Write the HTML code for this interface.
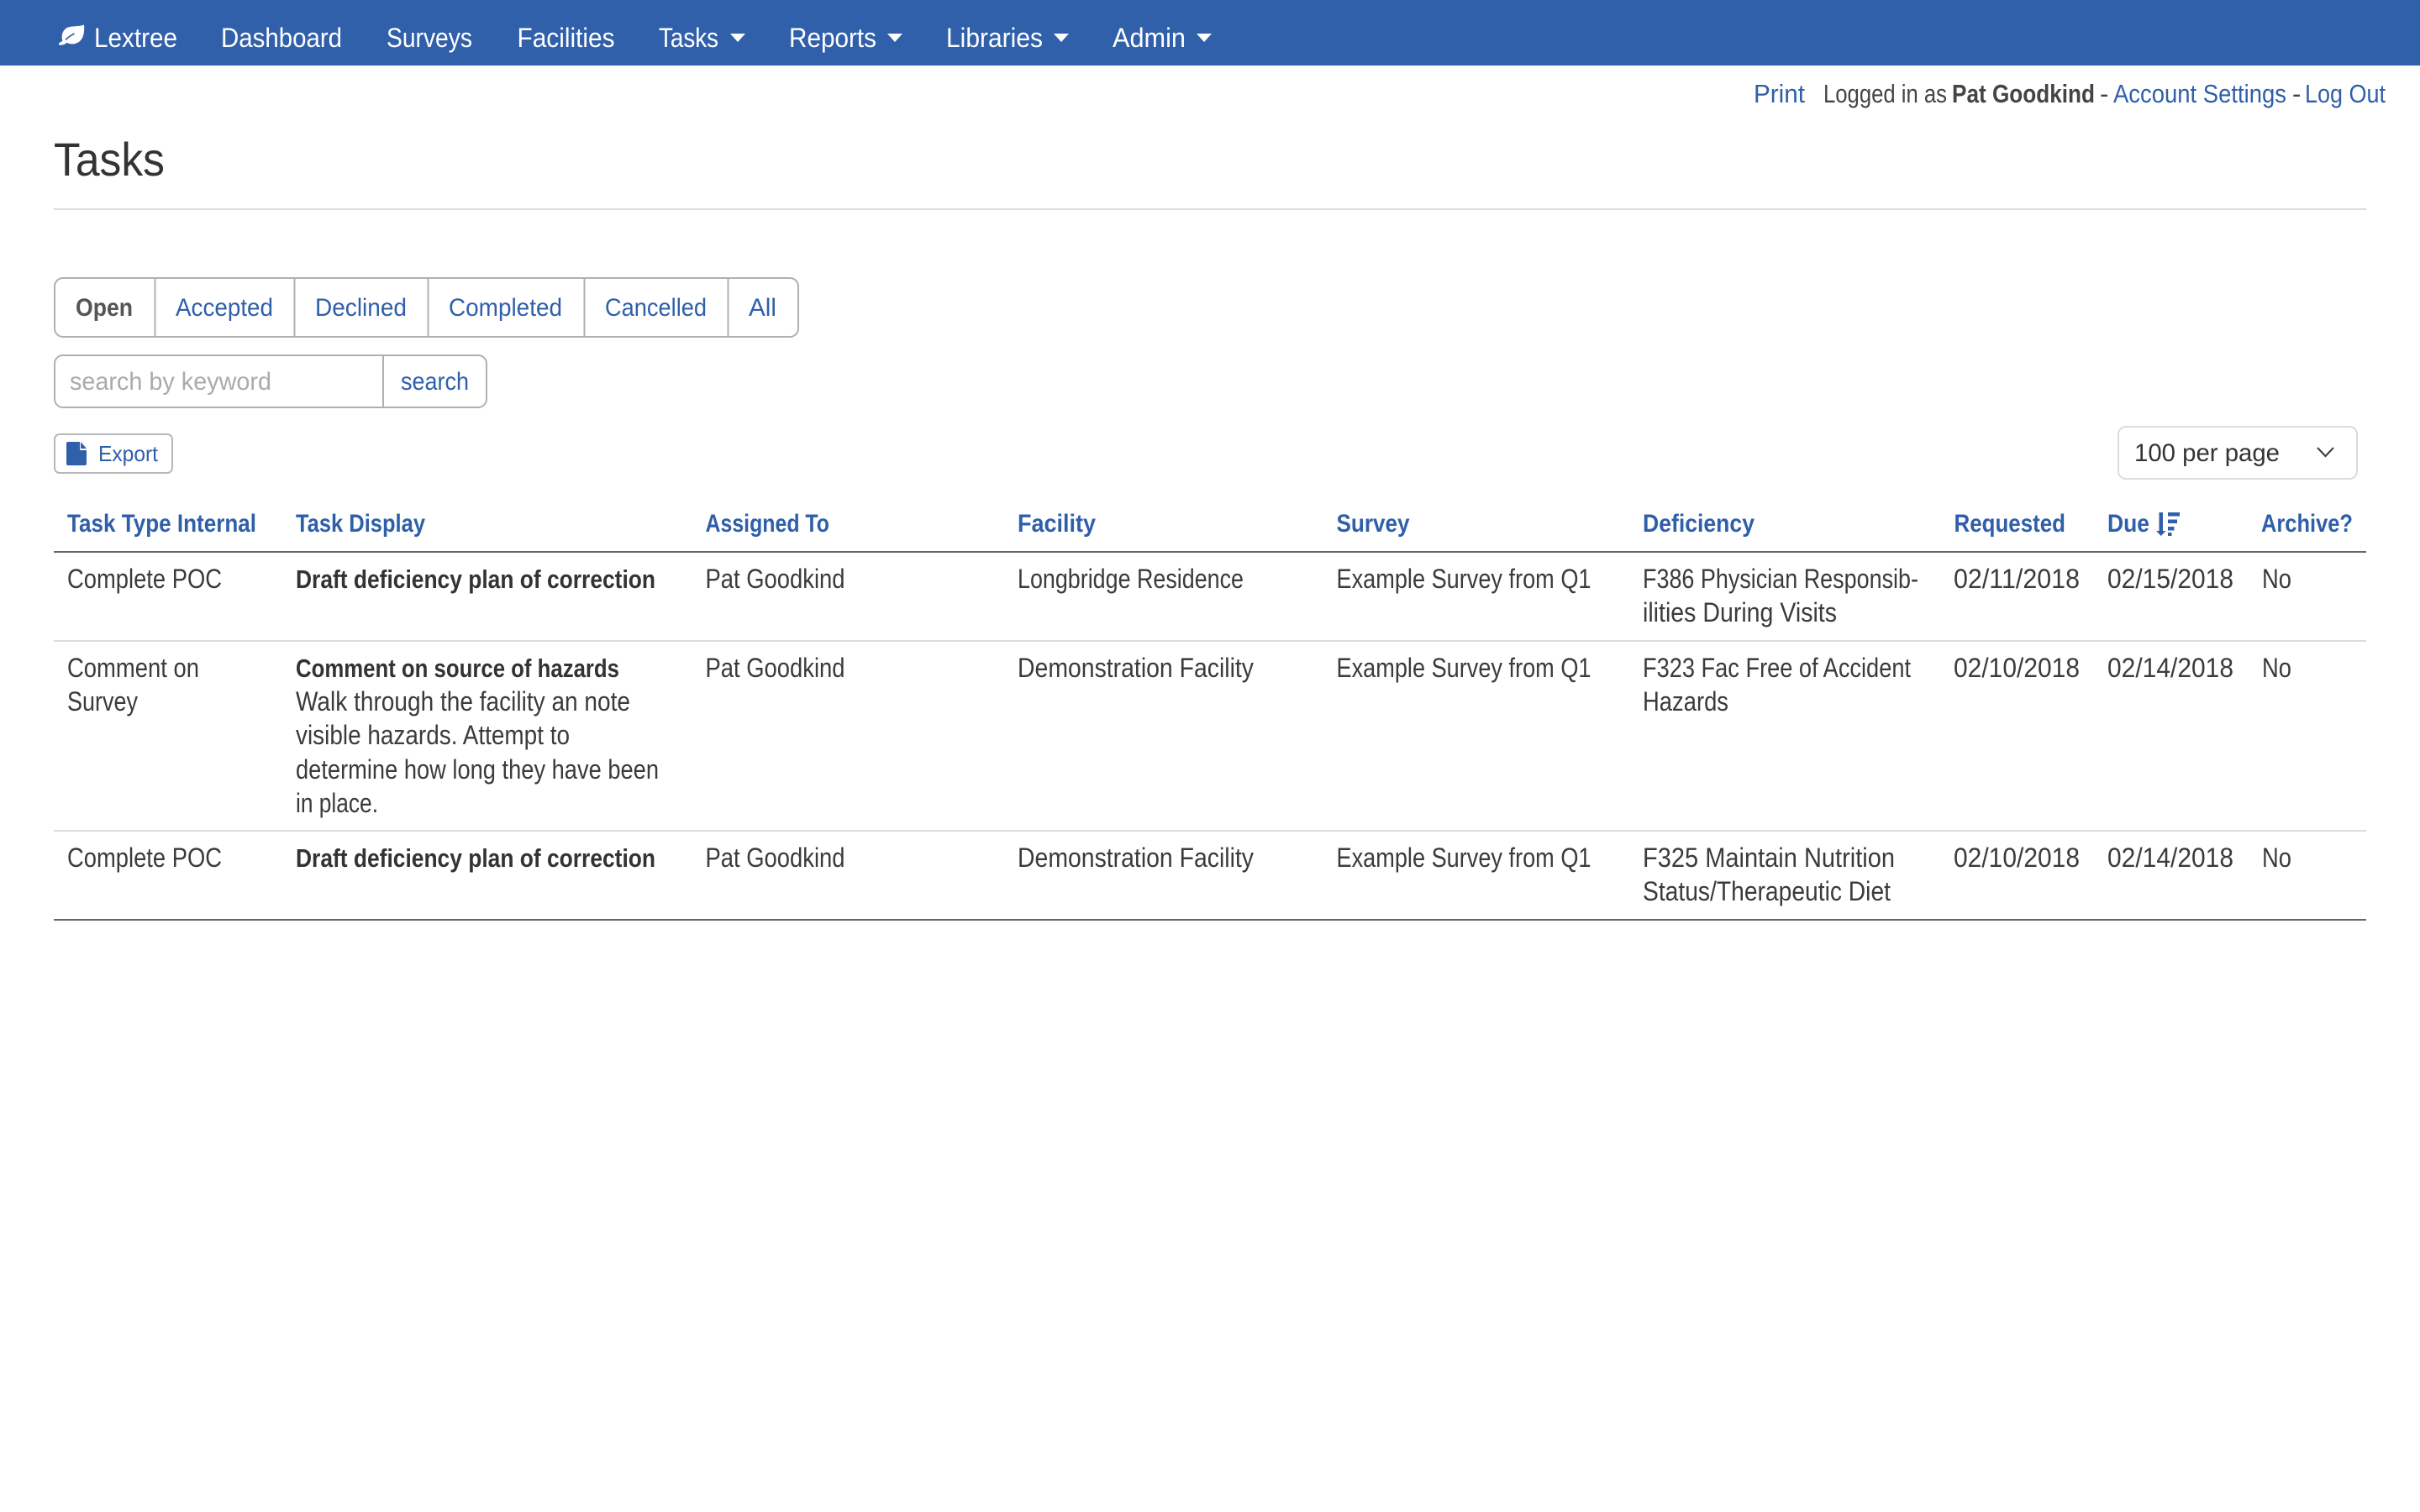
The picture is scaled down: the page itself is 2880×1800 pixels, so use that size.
<!DOCTYPE html>
<html><head><meta charset="utf-8"><title>Tasks</title>
<style>
html,body{margin:0;padding:0;background:#fff;width:2880px;height:1800px;overflow:hidden}
svg{display:block}
text{font-family:"Liberation Sans",sans-serif;font-size:32px;fill:#3b3b3b}
.n{fill:#fff}
.l{fill:#2f5fa9}
.h{fill:#2f5fa9;font-weight:700;font-size:30px}
.b{font-weight:700;font-size:31px;fill:#333}
</style></head><body>
<svg width="2880" height="1800" viewBox="0 0 2880 1800" xmlns="http://www.w3.org/2000/svg">
<rect x="0" y="0" width="2880" height="78" fill="#3160aa"/>
<path d="M70.500 53.500c-1-.8-.7-2.200.5-2.800 1.200-.6 2.500-1.300 3.500-2.200-1.800-5-.6-11 3.500-14.300 5.500-4.300 14.500-1.700 22-4.700.7 8-.3 15.500-5.200 19.700-4.300 3.600-10.600 4.200-15.100 1.700-1.800 1.300-5.700 3.600-9.200 2.600z" fill="#fff"/>
<path d="M78 47.500c2.800-3 6.200-5.300 10.500-7.500" stroke="#3160aa" stroke-width="1.600" fill="none"/>
<text class="n" x="112" y="56" textLength="99" lengthAdjust="spacingAndGlyphs">Lextree</text>
<text class="n" x="263" y="56" textLength="144" lengthAdjust="spacingAndGlyphs">Dashboard</text>
<text class="n" x="460" y="56" textLength="102" lengthAdjust="spacingAndGlyphs">Surveys</text>
<text class="n" x="615.500" y="56" textLength="116" lengthAdjust="spacingAndGlyphs">Facilities</text>
<text class="n" x="784" y="56" textLength="71" lengthAdjust="spacingAndGlyphs">Tasks</text>
<path d="M869 40h18l-9 10z" fill="#fff"/>
<text class="n" x="939" y="56" textLength="104" lengthAdjust="spacingAndGlyphs">Reports</text>
<path d="M1056 40h18l-9 10z" fill="#fff"/>
<text class="n" x="1126" y="56" textLength="115" lengthAdjust="spacingAndGlyphs">Libraries</text>
<path d="M1254 40h18l-9 10z" fill="#fff"/>
<text class="n" x="1324" y="56" textLength="87" lengthAdjust="spacingAndGlyphs">Admin</text>
<path d="M1424 40h18l-9 10z" fill="#fff"/>

<text class="l" x="2087" y="122" textLength="61" lengthAdjust="spacingAndGlyphs" style="font-size:31px">Print</text>
<text x="2170" y="122" textLength="147" lengthAdjust="spacingAndGlyphs" style="font-size:31px;fill:#444">Logged in as</text>
<text x="2323" y="122" textLength="170" lengthAdjust="spacingAndGlyphs" style="font-size:31px;font-weight:700;fill:#444">Pat Goodkind</text>
<text x="2499" y="122" style="font-size:31px;fill:#444">-</text>
<text class="l" x="2515" y="122" textLength="206" lengthAdjust="spacingAndGlyphs" style="font-size:31px">Account Settings</text>
<text x="2728" y="122" style="font-size:31px;fill:#444">-</text>
<text class="l" x="2743" y="122" textLength="96" lengthAdjust="spacingAndGlyphs" style="font-size:31px">Log Out</text>

<text x="64" y="209" textLength="132" lengthAdjust="spacingAndGlyphs" style="font-size:56px;fill:#333">Tasks</text>
<rect x="64" y="248" width="2752" height="2" fill="#dcdcdc"/>

<rect x="65" y="331" width="885" height="70" rx="10" fill="#fff" stroke="#b0b0b0" stroke-width="2"/>
<path d="M184.500 331v70M350.500 331v70M509.500 331v70M695.500 331v70M866.500 331v70" stroke="#b0b0b0" stroke-width="2" fill="none"/>
<text x="90" y="376" textLength="68" lengthAdjust="spacingAndGlyphs" style="font-size:30px;font-weight:700;fill:#555">Open</text>
<text class="l" x="209" y="376" textLength="116" lengthAdjust="spacingAndGlyphs" style="font-size:30px">Accepted</text>
<text class="l" x="375" y="376" textLength="109" lengthAdjust="spacingAndGlyphs" style="font-size:30px">Declined</text>
<text class="l" x="534" y="376" textLength="135" lengthAdjust="spacingAndGlyphs" style="font-size:30px">Completed</text>
<text class="l" x="720" y="376" textLength="121" lengthAdjust="spacingAndGlyphs" style="font-size:30px">Cancelled</text>
<text class="l" x="891" y="376" textLength="33" lengthAdjust="spacingAndGlyphs" style="font-size:30px">All</text>

<rect x="65" y="423" width="514" height="62" rx="10" fill="#fff" stroke="#b0b0b0" stroke-width="2"/>
<path d="M456 423v62" stroke="#b0b0b0" stroke-width="2" fill="none"/>
<text x="83" y="464" textLength="240" lengthAdjust="spacingAndGlyphs" style="font-size:30px;fill:#aaa">search by keyword</text>
<text class="l" x="477" y="464" textLength="81" lengthAdjust="spacingAndGlyphs" style="font-size:30px">search</text>

<rect x="65" y="517" width="140" height="46" rx="6" fill="#fff" stroke="#b8b8b8" stroke-width="2"/>
<path d="M81 526h14v8.500a1.500 1.500 0 0 0 1.500 1.500H103v16a2 2 0 0 1-2 2H81a2 2 0 0 1-2-2V528a2 2 0 0 1 2-2zM96 526l7 8h-7z" fill="#3160aa"/>
<text class="l" x="117" y="549" textLength="71" lengthAdjust="spacingAndGlyphs" style="font-size:26px">Export</text>

<rect x="2521" y="508" width="284" height="62" rx="9" fill="#fff" stroke="#dcdcdc" stroke-width="2"/>
<text x="2540" y="549" textLength="173" lengthAdjust="spacingAndGlyphs" style="font-size:30px;fill:#333">100 per page</text>
<path d="M2758 533l9.500 10 9.500-10" stroke="#444" stroke-width="2.200" fill="none"/>

<text class="h" x="80" y="633" textLength="225" lengthAdjust="spacingAndGlyphs">Task Type Internal</text>
<text class="h" x="352" y="633" textLength="154" lengthAdjust="spacingAndGlyphs">Task Display</text>
<text class="h" x="839.500" y="633" textLength="147.500" lengthAdjust="spacingAndGlyphs">Assigned To</text>
<text class="h" x="1211" y="633" textLength="93" lengthAdjust="spacingAndGlyphs">Facility</text>
<text class="h" x="1590.500" y="633" textLength="87" lengthAdjust="spacingAndGlyphs">Survey</text>
<text class="h" x="1955" y="633" textLength="133" lengthAdjust="spacingAndGlyphs">Deficiency</text>
<text class="h" x="2325.500" y="633" textLength="132.500" lengthAdjust="spacingAndGlyphs">Requested</text>
<text class="h" x="2508" y="633" textLength="50" lengthAdjust="spacingAndGlyphs">Due</text>
<path d="M2569.500 610h4.500v22h3.500l-5.700 6-5.800-6h3.500zM2580 610h14v4.500h-14zM2580 618.500h11v4.500h-11zM2580 627h7.500v4.500h-7.500zM2580 634h4.500v4h-4.500z" fill="#3160aa"/>
<text class="h" x="2691" y="633" textLength="109" lengthAdjust="spacingAndGlyphs">Archive?</text>
<rect x="64" y="656" width="2752" height="2" fill="#666"/>

<text x="80" y="700" textLength="184" lengthAdjust="spacingAndGlyphs">Complete POC</text>
<text class="b" x="352" y="700" textLength="428" lengthAdjust="spacingAndGlyphs">Draft deficiency plan of correction</text>
<text x="839.500" y="700" textLength="166" lengthAdjust="spacingAndGlyphs">Pat Goodkind</text>
<text x="1211" y="700" textLength="269" lengthAdjust="spacingAndGlyphs">Longbridge Residence</text>
<text x="1590.500" y="700" textLength="303" lengthAdjust="spacingAndGlyphs">Example Survey from Q1</text>
<text x="1955" y="700" textLength="328" lengthAdjust="spacingAndGlyphs">F386 Physician Responsib-</text>
<text x="1955" y="740" textLength="231" lengthAdjust="spacingAndGlyphs">ilities During Visits</text>
<text x="2325" y="700" textLength="150" lengthAdjust="spacingAndGlyphs">02/11/2018</text>
<text x="2508" y="700" textLength="150" lengthAdjust="spacingAndGlyphs">02/15/2018</text>
<text x="2692" y="700" textLength="35" lengthAdjust="spacingAndGlyphs">No</text>
<rect x="64" y="762" width="2752" height="2" fill="#dcdcdc"/>

<text x="80" y="806" textLength="157" lengthAdjust="spacingAndGlyphs">Comment on</text>
<text x="80" y="846" textLength="84" lengthAdjust="spacingAndGlyphs">Survey</text>
<text class="b" x="352" y="806" textLength="385" lengthAdjust="spacingAndGlyphs">Comment on source of hazards</text>
<text x="352" y="846" textLength="398" lengthAdjust="spacingAndGlyphs">Walk through the facility an note</text>
<text x="352" y="886" textLength="326" lengthAdjust="spacingAndGlyphs">visible hazards. Attempt to</text>
<text x="352" y="927" textLength="432" lengthAdjust="spacingAndGlyphs">determine how long they have been</text>
<text x="352" y="967" textLength="98" lengthAdjust="spacingAndGlyphs">in place.</text>
<text x="839.500" y="806" textLength="166" lengthAdjust="spacingAndGlyphs">Pat Goodkind</text>
<text x="1211" y="806" textLength="281" lengthAdjust="spacingAndGlyphs">Demonstration Facility</text>
<text x="1590.500" y="806" textLength="303" lengthAdjust="spacingAndGlyphs">Example Survey from Q1</text>
<text x="1955" y="806" textLength="319" lengthAdjust="spacingAndGlyphs">F323 Fac Free of Accident</text>
<text x="1955" y="846" textLength="102" lengthAdjust="spacingAndGlyphs">Hazards</text>
<text x="2325" y="806" textLength="150" lengthAdjust="spacingAndGlyphs">02/10/2018</text>
<text x="2508" y="806" textLength="150" lengthAdjust="spacingAndGlyphs">02/14/2018</text>
<text x="2692" y="806" textLength="35" lengthAdjust="spacingAndGlyphs">No</text>
<rect x="64" y="988" width="2752" height="2" fill="#dcdcdc"/>

<text x="80" y="1032" textLength="184" lengthAdjust="spacingAndGlyphs">Complete POC</text>
<text class="b" x="352" y="1032" textLength="428" lengthAdjust="spacingAndGlyphs">Draft deficiency plan of correction</text>
<text x="839.500" y="1032" textLength="166" lengthAdjust="spacingAndGlyphs">Pat Goodkind</text>
<text x="1211" y="1032" textLength="281" lengthAdjust="spacingAndGlyphs">Demonstration Facility</text>
<text x="1590.500" y="1032" textLength="303" lengthAdjust="spacingAndGlyphs">Example Survey from Q1</text>
<text x="1955" y="1032" textLength="300" lengthAdjust="spacingAndGlyphs">F325 Maintain Nutrition</text>
<text x="1955" y="1072" textLength="295" lengthAdjust="spacingAndGlyphs">Status/Therapeutic Diet</text>
<text x="2325" y="1032" textLength="150" lengthAdjust="spacingAndGlyphs">02/10/2018</text>
<text x="2508" y="1032" textLength="150" lengthAdjust="spacingAndGlyphs">02/14/2018</text>
<text x="2692" y="1032" textLength="35" lengthAdjust="spacingAndGlyphs">No</text>
<rect x="64" y="1094" width="2752" height="2" fill="#666"/>
</svg>
</body></html>
